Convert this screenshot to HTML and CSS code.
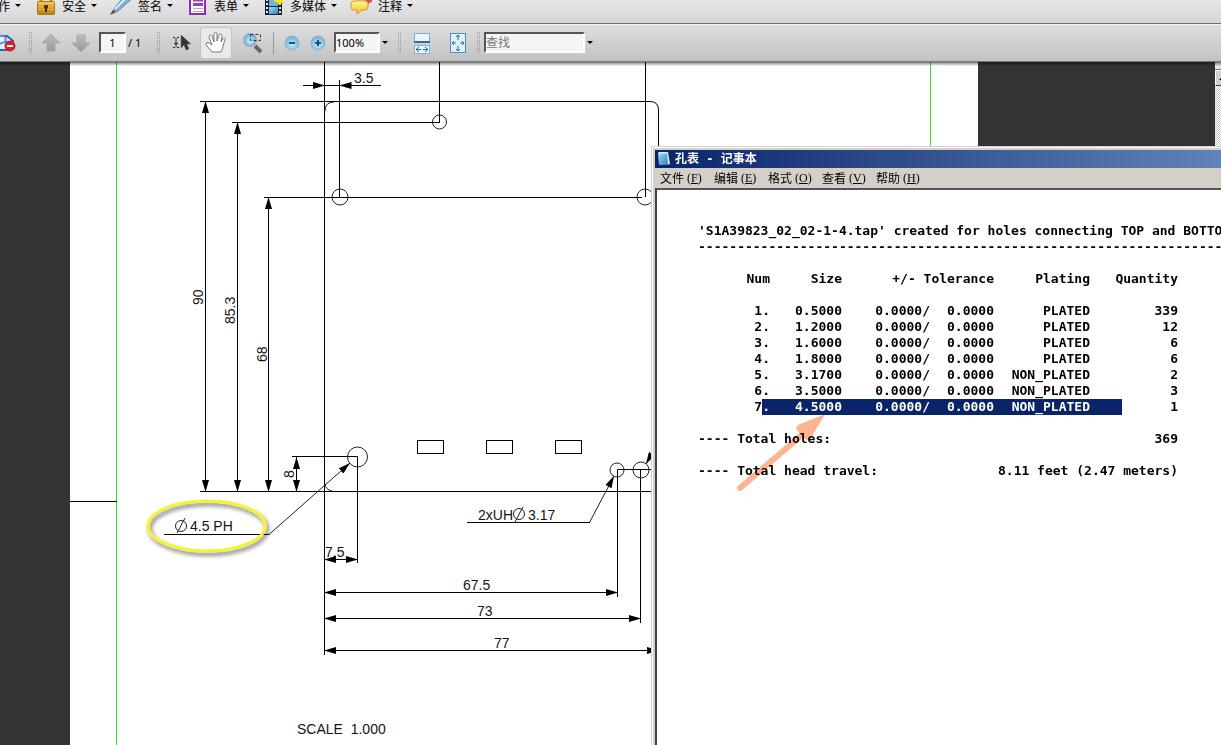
FILE: index.html
```html
<!DOCTYPE html>
<html lang="zh-CN">
<head>
<meta charset="utf-8">
<title>孔表</title>
<link rel="stylesheet" href="styles.css">
</head>
<body>
<svg class="defs" aria-hidden="true">
  <defs>
    <linearGradient id="gold" x1="0" y1="0" x2="0" y2="1"><stop offset="0" stop-color="#f8cf4e"/><stop offset="1" stop-color="#b87a12"/></linearGradient>
    <linearGradient id="yellow" x1="0" y1="0" x2="0" y2="1"><stop offset="0" stop-color="#fff79a"/><stop offset="1" stop-color="#f5bd1c"/></linearGradient>
    <linearGradient id="blue" x1="0" y1="0" x2="1" y2="1"><stop offset="0" stop-color="#a9dcf5"/><stop offset="1" stop-color="#2f7fba"/></linearGradient>
    <linearGradient id="gray" x1="0" y1="0" x2="0" y2="1"><stop offset="0" stop-color="#bdbdbd"/><stop offset="1" stop-color="#999"/></linearGradient>
    <radialGradient id="ball" cx="0.5" cy="0.6" r="0.6"><stop offset="0" stop-color="#c9efff"/><stop offset="1" stop-color="#6fa9d0"/></radialGradient>
  </defs>
</svg>

<nav class="menubar">
  <button class="task">作<i class="caret"></i></button>
  <button class="task">
    <svg width="22" height="18" viewBox="0 0 22 18"><path d="M5 3V-1M15 3V-1" stroke="#b98a28" stroke-width="3"/><rect x="1.500" y="1.500" width="17" height="13" rx="1" fill="url(#gold)" stroke="#a8761c"/><path d="M2 5.500h16M2 9.500h16" stroke="#e0aa40"/><path d="M8 5h4v3l-1 1v3H9V9L8 8z" fill="#4a3208"/></svg>
    安全<i class="caret"></i></button>
  <button class="task">
    <svg width="22" height="18" viewBox="0 0 22 18"><path d="M-1 14L4 6 12-3h10L14 4 6 11z" fill="#7fb2d6" stroke="#5b84a3"/><path d="M3 9L14-2" stroke="#d9eefa" stroke-width="2"/><path d="M-2 15l3-5 3 2z" fill="#555"/></svg>
    签名<i class="caret"></i></button>
  <button class="task">
    <svg width="22" height="18" viewBox="0 0 22 18"><rect x="2" y="-4" width="15" height="18" fill="#fff" stroke="#8d2fb4" stroke-width="2"/><path d="M5 0h10M5 4.500h10" stroke="#9640c0" stroke-width="3"/><path d="M5 8.500h10M5 11.500h10" stroke="#b0a8b4"/></svg>
    表单<i class="caret"></i></button>
  <button class="task">
    <svg width="22" height="18" viewBox="0 0 22 18"><rect x="1" y="-2" width="17" height="17" fill="#17242f"/><rect x="5" y="-1" width="9" height="7" fill="#6fb4da"/><rect x="5" y="7" width="9" height="7" fill="url(#blue)"/><path d="M3 -1v16M16 -1v16" stroke="#dce8f0" stroke-width="2" stroke-dasharray="2 2"/><path d="M11-3h10l-2 4 2 2-4 0-2 2-2-3-3 0z" fill="#ffe31c"/></svg>
    多媒体<i class="caret"></i></button>
  <button class="task">
    <svg width="22" height="18" viewBox="0 0 22 18"><path d="M12-1l4 2 4-2M15 5q0-3 5-4" fill="none" stroke="#d94a5a" stroke-width="2"/><path d="M2 1q-3 0-3 3v3q0 3 3 3h3v4l5-4h3q3 0 3-3V4q0-3-3-3z" fill="url(#yellow)" stroke="#d9981c"/></svg>
    注释<i class="caret"></i></button>
</nav>

<div class="toolbar">
  <button class="tool first" aria-label="搜索"><svg width="18" height="20" viewBox="0 0 18 20"><path d="M-2 3h10l6 5v7l-6 2H-2z" fill="#e8f2fc" stroke="#2c64b8" stroke-width="2"/><path d="M1 3c5-1 7 3 5 6L0 11M7 4l-1 5 7 0" fill="none" stroke="#5a98dc" stroke-width="2"/><circle cx="11" cy="13" r="5" fill="#dd1f2a" stroke="#c01820"/><path d="M8 13h6" stroke="#fff" stroke-width="2"/></svg></button>
  <i class="grip after-first"></i>
  <button class="tool page-up" aria-label="上一页"><svg width="20" height="20" viewBox="0 0 20 20"><path d="M10 1l9 9h-5v8H6v-8H1z" fill="url(#gray)" stroke="#aaa"/></svg></button>
  <button class="tool" aria-label="下一页"><svg width="20" height="20" viewBox="0 0 20 20"><path d="M10 19l9-9h-5V2H6v8H1z" fill="url(#gray)" stroke="#aaa"/></svg></button>
  <input class="field page-no" type="text" value="1" aria-label="页码">
  <span class="page-total">/ 1</span>
  <i class="grip"></i>
  <button class="tool select-tool" aria-label="选择"><svg width="20" height="20" viewBox="0 0 20 20"><path d="M0 4.500h2M4 4.500h2M0 14.500h2M4 14.500h2M3 5v9M1 10.500h4" stroke="#222" fill="none"/><path d="M8 2v13l3-3 2 5 3-1-2-5h4z" fill="#333" stroke="#666" stroke-width="0.500"/></svg></button>
  <button class="tool active" aria-label="手形"><svg width="24" height="24" viewBox="0 0 24 24"><path d="M8 21C6 18 3 16 2 13c0-2 2-2 3-1l3 2L5 6c0-2 2-3 3-1l2 6V3c0-2 3-2 3 0v7l2-6c1-2 3-1 3 1l-1 6 2-3c1-2 3 0 2 1-2 4-2 9-4 12z" fill="#fff" stroke="#777"/></svg></button>
  <button class="tool marquee" aria-label="选框缩放"><svg width="22" height="22" viewBox="0 0 22 22"><path d="M13 14l6 6" stroke="#666" stroke-width="4"/><circle cx="8" cy="8" r="6" fill="url(#ball)" stroke="#83b1d0" stroke-width="2"/><rect x="8.500" y="2.500" width="10" height="6" fill="none" stroke="#333" stroke-dasharray="3 2"/></svg></button>
  <i class="rule"></i>
  <button class="tool" aria-label="缩小"><svg width="16" height="16" viewBox="0 0 16 16"><circle cx="8" cy="8" r="7" fill="url(#ball)" stroke="#8eb6d2"/><path d="M5 8h6" stroke="#12508c" stroke-width="2"/></svg></button>
  <button class="tool" aria-label="放大"><svg width="16" height="16" viewBox="0 0 16 16"><circle cx="8" cy="8" r="7" fill="url(#ball)" stroke="#8eb6d2"/><path d="M5 8h6M8 5v6" stroke="#12508c" stroke-width="2"/></svg></button>
  <input class="field zoom" type="text" value="100%" aria-label="缩放比例">
  <button class="drop" aria-label="缩放选项"><i class="caret"></i></button>
  <i class="grip narrow"></i>
  <button class="tool fit" aria-label="适合宽度"><svg width="18" height="22" viewBox="0 0 18 22"><rect x="1.500" y="1.500" width="15" height="9" fill="#eaf6ff" stroke="#7db0d2"/><path d="M1 10h16" stroke="#2f6f9f" stroke-width="2"/><rect x="1.500" y="13.500" width="15" height="8" fill="#eaf6ff" stroke="#7db0d2"/><path d="M3 17.500h5M10 17.500h5M6 15l-3 2.500 3 2.500M12 15l3 2.500-3 2.500" fill="none" stroke="#256aa0"/></svg></button>
  <button class="tool fit-page" aria-label="适合页面"><svg width="18" height="22" viewBox="0 0 18 22"><rect x="1.500" y="1.500" width="15" height="19" fill="#dff1fd" stroke="#4a8fbf"/><path d="M9 3v5M9 14v5M3 11h4M11 11h4M7 5l2-2 2 2M7 17l2 2 2-2M5 9l-2 2 2 2M13 9l2 2-2 2" fill="none" stroke="#256aa0"/></svg></button>
  <i class="grip"></i>
  <input class="field search" type="text" placeholder="查找" aria-label="查找">
  <button class="drop" aria-label="查找选项"><i class="caret"></i></button>
</div>

<main class="workspace">
  <section class="page">
    <svg class="drawing" width="908" height="683" viewBox="70 62 908 683" role="img" aria-label="机械图">
      <defs>
        <marker id="tip" viewBox="0 0 12 7" refX="12" refY="3.500" markerWidth="12" markerHeight="7" markerUnits="userSpaceOnUse" orient="auto-start-reverse"><path d="M0 0l12 3.500L0 7z"/></marker>
        <filter id="soft" x="-20%" y="-30%" width="140%" height="170%"><feDropShadow dx="2" dy="3" stdDeviation="2" flood-color="#000" flood-opacity="0.600"/></filter>
      </defs>
      <path d="M116.500 62v683M930.500 62v683" stroke="#3fdc3f" fill="none"/>
      <g class="line">
        <path d="M70 501.500H117"/>
        <path d="M324.500 62V655M439.500 62V122.500M645.500 62V197M339.500 80V197"/>
        <path d="M200 101.500H650Q658.500 101.500 658.500 110V146M232 122.500H440M264 197.500H642M200 491.500H652"/>
        <path d="M292 456.500H357.500V563M617.500 597V469.500H652M640.500 470V623"/>
        <path d="M350 85.500H381"/>
        <rect x="417.500" y="440.500" width="26" height="13"/><rect x="486.500" y="440.500" width="26" height="13"/><rect x="555.500" y="440.500" width="26" height="13"/>
      </g>
      <g class="line">
        <path marker-end="url(#tip)" d="M303 85.500H325"/>
        <path marker-start="url(#tip)" d="M339.500 85.500H352"/>
        <path d="M325 85.500H340"/>
      </g>
      <g class="line dim">
        <path d="M205.500 101V492"/><path d="M237.500 122V492"/><path d="M268.500 197V492"/><path d="M296.500 457V492"/>
        <path d="M324 559.500H358"/><path d="M324 592.500H618"/><path d="M324 618.500H641"/><path d="M324 650.500H659"/>
      </g>
      <g class="thin">
        <circle cx="439.500" cy="122" r="7"/><circle cx="340" cy="197" r="8"/><circle cx="645" cy="197" r="8"/>
        <circle cx="357.500" cy="457" r="10"/><circle cx="617" cy="470" r="7"/><circle cx="641" cy="470" r="8"/>
        <path d="M325 111Q325 102 334 102M325 484Q326 490 332 491"/>
        <path d="M269 534.500L350 463" marker-end="url(#tip)"/><path d="M589.500 522.500L614 476" marker-end="url(#tip)"/><path d="M658 443L646 464" marker-end="url(#tip)"/>
        <circle cx="181" cy="526" r="5.500"/><path d="M177 533L185 518"/>
        <circle cx="519" cy="514" r="5.500"/><path d="M515 522L523 507"/>
      </g>
      <path class="line" d="M164 534.500H269M467 522.500H590"/>
      <g class="label">
        <text x="354" y="83">3.5</text>
        <text transform="translate(203 305) rotate(-90)">90</text>
        <text transform="translate(235 324) rotate(-90)">85.3</text>
        <text transform="translate(267 362) rotate(-90)">68</text>
        <text transform="translate(294 478) rotate(-90)">8</text>
        <text x="190" y="531">4.5 PH</text>
        <text x="325" y="557">7.5</text>
        <text x="463" y="590">67.5</text>
        <text x="477" y="616">73</text>
        <text x="494" y="648">77</text>
        <text x="478" y="520">2xUH</text><text x="528" y="520">3.17</text>
        <text x="297" y="734">SCALE  1.000</text>
      </g>
      <ellipse cx="206.500" cy="526" rx="58.500" ry="25" fill="none" stroke="#f6f32c" stroke-width="3" filter="url(#soft)"/>
    </svg>
  </section>
  <div class="scrollbar"><i class="split"></i><button class="scroll-up" aria-label="向上滚动"><i></i></button></div>

  <section class="notepad">
    <header class="titlebar">
      <svg width="16" height="16" viewBox="0 0 16 16"><path d="M3 1h9l2 12-3 1H3z" fill="#d4edf9"/><path d="M2 2h9l1 12H3z" fill="url(#blue)"/><path d="M2 2h9" stroke="#d9f4ff" stroke-width="1"/></svg>
      <h1>孔表 - 记事本</h1>
    </header>
    <nav class="menus">
      <button>文件<span>(<u>F</u>)</span></button><button>编辑<span>(<u>E</u>)</span></button><button>格式<span>(<u>O</u>)</span></button><button>查看<span>(<u>V</u>)</span></button><button>帮助<span>(<u>H</u>)</span></button>
    </nav>
    <div class="text">
      <p>'S1A39823_02_02-1-4.tap' created for holes connecting TOP and BOTTOM</p>
      <p>----------------------------------------------------------------------</p>
      <table>
        <colgroup><col class="c-num"><col class="c-size"><col class="c-plus"><col class="c-minus"><col class="c-plating"><col class="c-qty"></colgroup>
        <thead>
          <tr><th>Num</th><th>Size</th><th colspan="2">+/- Tolerance</th><th>Plating</th><th>Quantity</th></tr>
        </thead>
        <tbody>
          <tr><td>1.</td><td>0.5000</td><td>0.0000/</td><td>0.0000</td><td>PLATED</td><td>339</td></tr>
          <tr><td>2.</td><td>1.2000</td><td>0.0000/</td><td>0.0000</td><td>PLATED</td><td>12</td></tr>
          <tr><td>3.</td><td>1.6000</td><td>0.0000/</td><td>0.0000</td><td>PLATED</td><td>6</td></tr>
          <tr><td>4.</td><td>1.8000</td><td>0.0000/</td><td>0.0000</td><td>PLATED</td><td>6</td></tr>
          <tr><td>5.</td><td>3.1700</td><td>0.0000/</td><td>0.0000</td><td>NON_PLATED</td><td>2</td></tr>
          <tr><td>6.</td><td>3.5000</td><td>0.0000/</td><td>0.0000</td><td>NON_PLATED</td><td>3</td></tr>
          <tr class="selected"><td>7<span>.</span></td><td>4.5000</td><td>0.0000/</td><td>0.0000</td><td>NON_PLATED</td><td>1</td></tr>
        </tbody>
      </table>
      <div class="total"><span>---- Total holes:</span><span>369</span></div>
      <div class="total"><span>---- Total head travel:</span><span>8.11 feet (2.47 meters)</span></div>
      <svg class="pointer" width="92" height="80" viewBox="0 0 92 80"><path d="M3 73L66 19" stroke="#fdb493" stroke-width="6" stroke-linecap="round"/><path d="M87 0L62 10Q58 12 61 16L69 24Q71 26 74 22z" fill="#fdb493" stroke="#fdb493" stroke-linejoin="round"/></svg>
    </div>
  </section>
</main>
</body>
</html>
```
FILE: styles.css
```css
* { box-sizing: border-box; }
body {
  margin: 0;
  min-height: 100vh;
  display: flex;
  flex-direction: column;
  overflow: hidden;
  font: 12px/16px "Noto Sans", "Noto Sans CJK SC", sans-serif;
  color: #000;
}
button { border: 0; padding: 0; background: none; font: inherit; color: inherit; display: flex; align-items: center; }
svg { flex: none; overflow: visible; }
.defs { position: absolute; width: 0; height: 0; }

.menubar {
  display: flex;
  gap: 15px;
  height: 24px;
  overflow: hidden;
  background: linear-gradient(#e6e6e6, #d6d6d6);
  border-bottom: 1px solid #6f6f6f;
  align-items: flex-start;
}
.task { height: 18px; line-height: 12px; padding-bottom: 7px; white-space: nowrap; font-family: "Noto Sans CJK SC", sans-serif; }
.task:first-child { margin-left: -2px; }
.task svg { margin-right: 4px; margin-top: 7px; }
.caret { width: 6px; border: 3px solid transparent; border-top-color: #000; border-bottom: 0; }
.task .caret { margin-left: 5px; }

.toolbar {
  display: flex;
  align-items: center;
  height: 38px;
  padding-bottom: 1px;
  background: linear-gradient(#dedede, #c2c2c2);
  border-top: 1px solid #f4f4f4;
  border-bottom: 1px solid #777;
  overflow: hidden;
}
.tool { margin-right: 10px; flex: none; }
.tool.first { margin-right: 12px; margin-left: -1px; }
.grip {
  width: 4px;
  height: 21px;
  margin-right: 12px;
  flex: none;
  background: linear-gradient(90deg, #999 1px, transparent 1px) 0 0 / 2px 100%;
  -webkit-mask: linear-gradient(#000 1px, transparent 1px) 0 0 / 100% 2px;
  mask: linear-gradient(#000 1px, transparent 1px) 0 0 / 100% 2px;
}
.grip.after-first { margin-right: 8px; }
.field {
  height: 21px;
  border: 2px solid;
  border-color: #555 #fff #fff #555;
  border-radius: 0;
  background: #f5f5f5;
  padding: 0;
  font: 11px/16px "Noto Sans", "Noto Sans CJK SC", sans-serif;
  color: #000;
  flex: none;
}
.field::placeholder { color: #777; font-size: 12px; }
.page-no { width: 27px; text-align: center; margin-left: -2px; }
.page-total { margin: 0 17px 0 2px; width: 12px; white-space: nowrap; font-size: 11px; }
.tool.select-tool { margin: 0 7px 0 0; }
.tool.active { width: 32px; height: 32px; justify-content: center; border: 1px solid #c4c4c4; border-radius: 3px; background: #e9e9e9; }
.tool.marquee { margin-right: 9px; }
.rule { width: 1px; height: 22px; background: #999; margin: 0 10px 0 0; }
.zoom { width: 46px; margin-left: -2px; }
.drop { margin: 0 10px 0 2px; flex: none; }
.narrow { margin-right: 11px; }
.fit { margin-right: 18px; }
.fit-page + .grip { margin-right: 3px; }
.search { width: 101px; }

.workspace { position: relative; flex: 1; display: flex; justify-content: space-between; background: #333; overflow: hidden; }
.workspace::before { content: ""; position: absolute; left: 0; right: 0; top: 0; height: 4px; background: linear-gradient(#0008, #0000); z-index: 1; }
.page { margin-left: 70px; background: #fff; flex: none; }
.drawing { display: block; }
.line { stroke: #000; fill: none; }
.thin { stroke: #222; fill: none; }
.dim path { marker-start: url(#tip); marker-end: url(#tip); }
.label { font: 14px "Liberation Sans", sans-serif; fill: #151515; }
.label text { white-space: pre; }

.scrollbar { width: 6px; overflow: hidden; background: repeating-conic-gradient(#d4d0c8 0 25%, #fff 0 50%) 0 0 / 2px 2px; }
.split { display: block; height: 8px; background: #e6e4e4; border-bottom: 1px solid #777; }
.scroll-up { width: 16px; height: 16px; background: #d4d0c8; border: 1px solid; border-color: #fff #404040 #404040 #fff; justify-content: center; }
.scroll-up i { border: 4px solid transparent; border-top: 0; border-bottom-color: #000; }

.notepad {
  position: absolute;
  left: 651px;
  right: -20px;
  top: 84px;
  bottom: -20px;
  display: flex;
  flex-direction: column;
  padding: 3px;
  background: #d4d0c8;
  border: 1px solid #d4d0c8;
  box-shadow: inset 1px 1px #fff;
  z-index: 2;
}
.titlebar { display: flex; align-items: center; gap: 3px; height: 18px; padding-left: 1px; background: linear-gradient(90deg, #0a246a, #6485b8); color: #fff; }
.titlebar h1 { margin: 0; font: bold 12px/18px "DejaVu Sans Mono", "Noto Sans CJK SC", monospace; white-space: pre; }
.menus { display: flex; height: 20px; padding-left: 5px; }
.menus button { width: 54px; gap: 3px; white-space: nowrap; font-family: "Noto Sans CJK SC", sans-serif; }
.menus span { font-family: "Liberation Serif", serif; }
.text {
  position: relative;
  flex: 1;
  background: #fff;
  border: solid #404040;
  border-width: 2px 0 0 2px;
  border-top-color: #555;
  padding: 33px 0 0 41px;
  overflow: hidden;
  font: bold 13px/16px "DejaVu Sans Mono", monospace;
}
.text p { margin: 0; white-space: pre; }
table { border-collapse: collapse; table-layout: fixed; width: 480px; margin: 16px 0; }
.c-num, .c-size { width: 72px; }
.c-plus, .c-qty { width: 88px; }
.c-minus { width: 64px; }
.c-plating { width: 96px; }
th, td { padding: 0; height: 16px; text-align: right; font-weight: bold; white-space: nowrap; }
thead th { padding-bottom: 16px; }
.selected td:not(:first-child):not(:last-child), .selected span { background: #0a246a; color: #fff; }
.selected span { display: inline-block; }
.selected td:last-child { background: linear-gradient(#0a246a, #0a246a) 0 0 / 32px 100% no-repeat; }
.total { display: flex; justify-content: space-between; width: 480px; margin-bottom: 16px; }
.pointer { position: absolute; left: 80px; top: 225px; mix-blend-mode: multiply; }
```
